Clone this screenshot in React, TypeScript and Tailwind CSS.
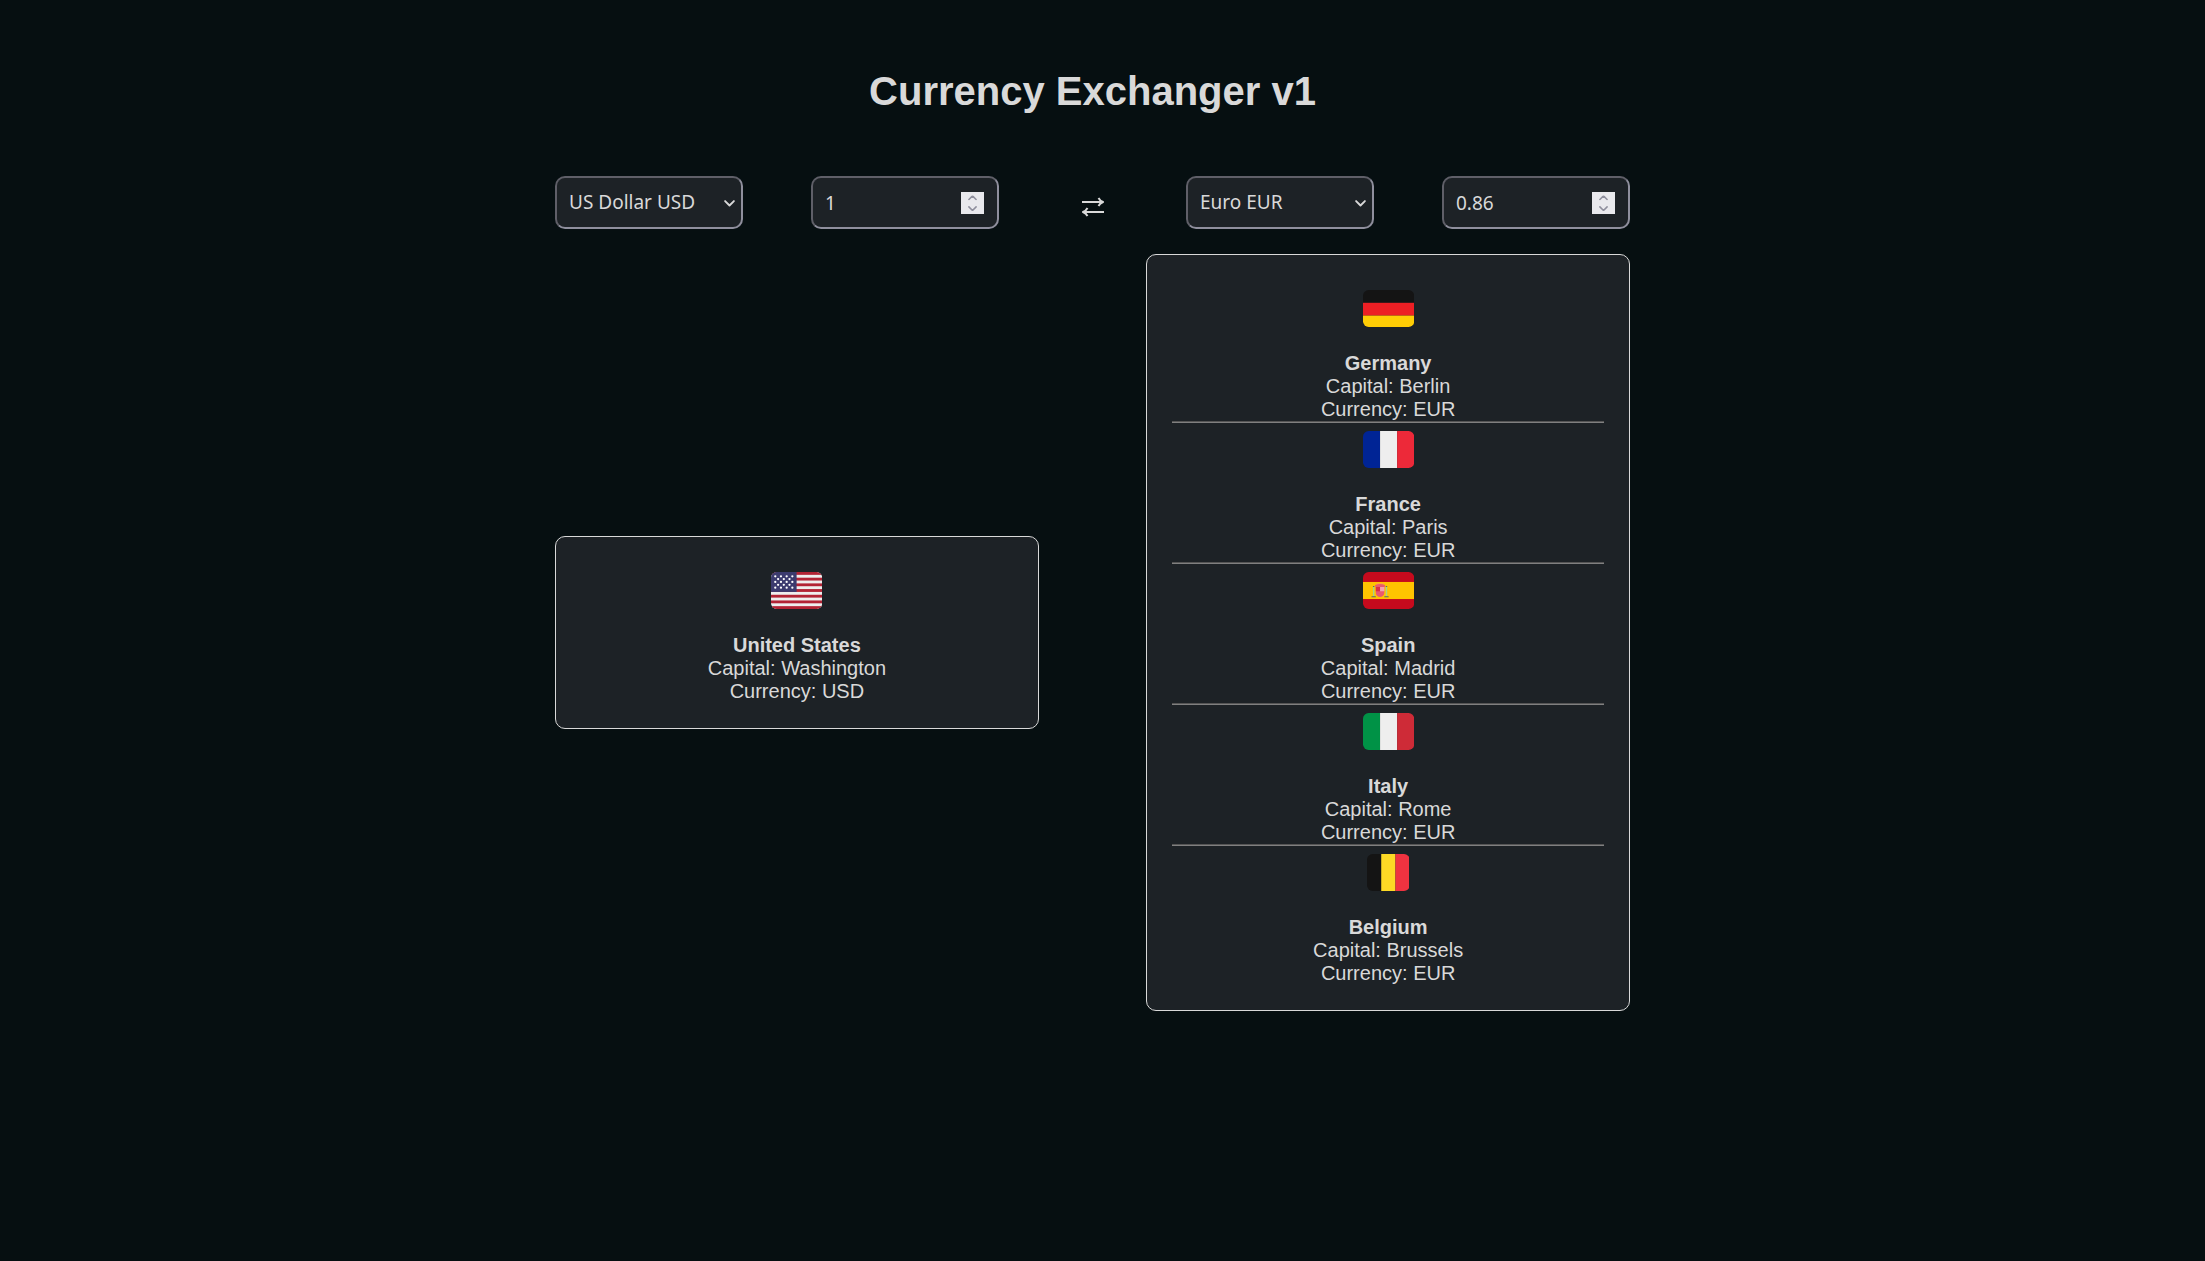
import { useState } from "react";
import type { ReactNode } from "react";

type FlagCode = "us" | "de" | "fr" | "es" | "it" | "be";

type Country = {
  code: FlagCode;
  name: string;
  capital: string;
  currency: string;
};

const usdCountries: Country[] = [
  { code: "us", name: "United States", capital: "Washington", currency: "USD" },
];

const eurCountries: Country[] = [
  { code: "de", name: "Germany", capital: "Berlin", currency: "EUR" },
  { code: "fr", name: "France", capital: "Paris", currency: "EUR" },
  { code: "es", name: "Spain", capital: "Madrid", currency: "EUR" },
  { code: "it", name: "Italy", capital: "Rome", currency: "EUR" },
  { code: "be", name: "Belgium", capital: "Brussels", currency: "EUR" },
];

const stripes = [0, 2, 4, 6, 8, 10, 12];
const stars = [
  [3, 3], [7, 3], [11, 3], [15, 3],
  [5, 5], [9, 5], [13, 5],
  [3, 7], [7, 7], [11, 7], [15, 7],
  [5, 9], [9, 9], [13, 9],
  [3, 11], [7, 11], [11, 11], [15, 11],
];

function Vertical({ a, b, c }: { a: string; b: string; c: string }) {
  return (
    <>
      <rect width="12" height="26" fill={a} />
      <rect x="12" width="12" height="26" fill={b} />
      <rect x="24" width="12" height="26" fill={c} />
    </>
  );
}

const flagArt: Record<FlagCode, ReactNode> = {
  us: (
    <>
      <rect width="36" height="26" fill="#eee" />
      {stripes.map((n) => (
        <rect key={n} y={n * 2} width="36" height="2" fill="#b22334" />
      ))}
      <rect width="18" height="14" fill="#3c3b6e" />
      {stars.map(([x, y]) => (
        <circle key={`${x}-${y}`} cx={x} cy={y} r="0.8" fill="#fff" />
      ))}
    </>
  ),
  de: (
    <>
      <rect width="36" height="9" fill="#141414" />
      <rect y="9" width="36" height="9" fill="#ed1f24" />
      <rect y="18" width="36" height="8" fill="#ffcd05" />
    </>
  ),
  fr: <Vertical a="#002495" b="#eee" c="#ed2939" />,
  es: (
    <>
      <rect width="36" height="26" fill="#c60a1d" />
      <rect y="7" width="36" height="12" fill="#ffc400" />
      <path d="M9.500 7.700h5v1.200h-5z" fill="#ffac33" />
      <path d="M9 9.500h6v5a3 3 0 0 1-6 0z" fill="#ea596e" />
      <path d="M9 10.500h3v3H9z" fill="#dd2e44" />
      <path d="M12 10.500h3v3h-3z" fill="#f4a2b2" />
      <path d="M8.500 9.200q3.500-1.600 7 0v1.200h-7z" fill="#ea596e" />
      <path d="M7 10.500h1V17H7zM16 10.500h1V17h-1z" fill="#a6d388" />
      <path d="M6 17h3v.8H6zM15 17h3v.8h-3zM7 9.800h1v.8H7zM16 9.800h1v.8h-1z" fill="#5c6570" />
    </>
  ),
  it: <Vertical a="#009246" b="#eee" c="#ce2b37" />,
  be: (
    <>
      <rect width="10" height="26" fill="#141414" />
      <rect x="10" width="10" height="26" fill="#fdda25" />
      <rect x="20" width="10" height="26" fill="#ef3340" />
    </>
  ),
};

function Flag({ code, label }: { code: FlagCode; label: string }) {
  const width = code === "be" ? 30 : 36;
  return (
    <svg
      role="img"
      aria-label={`Flag of ${label}`}
      viewBox={`0 0 ${width} 26`}
      className="h-[37px] w-auto"
    >
      <clipPath id={`flag-${code}`}>
        <rect width={width} height="26" rx="4" />
      </clipPath>
      <g clipPath={`url(#flag-${code})`}>{flagArt[code]}</g>
    </svg>
  );
}

function CountryItem({ country }: { country: Country }) {
  return (
    <li className="flex flex-col items-center text-xl leading-[23px] not-last:after:h-0.5 not-last:after:w-full not-last:after:border-t not-last:after:border-b not-last:after:border-t-[#555] not-last:after:border-b-[#808080] not-last:after:content-['']">
      <div className="flex h-[70px] items-start pt-2">
        <Flag code={country.code} label={country.name} />
      </div>
      <h2 className="font-bold">{country.name}</h2>
      <p>Capital: {country.capital}</p>
      <p>Currency: {country.currency}</p>
    </li>
  );
}

function CountryCard({ countries }: { countries: Country[] }) {
  return (
    <ul className="w-[45%] rounded-[10px] border border-[#d9d9d9] bg-[#1d2226] px-[25px] pt-[27px] pb-[25px]">
      {countries.map((country) => (
        <CountryItem key={country.code} country={country} />
      ))}
    </ul>
  );
}

function Chevron({ className }: { className: string }) {
  return (
    <svg
      aria-hidden="true"
      viewBox="0 0 10 6"
      fill="none"
      stroke="currentColor"
      strokeWidth="1.700"
      strokeLinecap="round"
      strokeLinejoin="round"
      className={className}
    >
      <path d="M1 1l4 4 4-4" />
    </svg>
  );
}

const fieldClass =
  "h-[53px] w-full appearance-none rounded-[10px] border-2 border-t-[#5f5f68] border-r-[#8f8f9d] border-b-[#8f8f9d] border-l-[#5f5f68] bg-[#1d2226] pl-3 font-['Noto_Sans',sans-serif] text-[19px] outline-none";

function CurrencySelect({
  label,
  value,
  onChange,
}: {
  label: string;
  value: string;
  onChange: (value: string) => void;
}) {
  return (
    <div className="relative w-[188px]">
      <select
        aria-label={label}
        value={value}
        onChange={(e) => onChange(e.target.value)}
        className={fieldClass}
      >
        <option value="USD">US Dollar USD</option>
        <option value="EUR">Euro EUR</option>
      </select>
      <Chevron className="pointer-events-none absolute top-6 right-2 w-[11px]" />
    </div>
  );
}

function AmountInput({
  label,
  value,
  onChange,
}: {
  label: string;
  value: string;
  onChange: (value: string) => void;
}) {
  const step = (delta: number) => onChange(String(Number(value) + delta));
  return (
    <div className="relative w-[188px]">
      <input
        type="number"
        aria-label={label}
        value={value}
        onChange={(e) => onChange(e.target.value)}
        className={`${fieldClass} pr-10 [-moz-appearance:textfield] [&::-webkit-inner-spin-button]:appearance-none`}
      />
      <div className="absolute top-4 right-[15px] flex h-[22px] w-[23px] flex-col bg-[#e9e9ed] text-[#8f8f9d]">
        <button
          type="button"
          aria-label={`Increase ${label}`}
          onClick={() => step(1)}
          className="flex flex-1 items-center justify-center"
        >
          <Chevron className="w-[9px] rotate-180" />
        </button>
        <button
          type="button"
          aria-label={`Decrease ${label}`}
          onClick={() => step(-1)}
          className="flex flex-1 items-center justify-center"
        >
          <Chevron className="w-[9px]" />
        </button>
      </div>
    </div>
  );
}

export default function App() {
  const [from, setFrom] = useState("USD");
  const [to, setTo] = useState("EUR");
  const [fromAmount, setFromAmount] = useState("1");
  const [toAmount, setToAmount] = useState("0.86");

  const swap = () => {
    setFrom(to);
    setTo(from);
    setFromAmount(toAmount);
    setToAmount(fromAmount);
  };

  const cards: Record<string, Country[]> = { USD: usdCountries, EUR: eurCountries };

  return (
    <div className="min-h-screen bg-[#060f11] pr-5 font-['Liberation_Sans',Arial,sans-serif] text-[#d9d9d9]">
      <main className="mx-auto flex max-w-[1075px] flex-col pt-[68px]">
        <h1 className="text-center text-[40px] leading-[46px] font-bold">Currency Exchanger v1</h1>
        <div className="mt-[62px] flex items-center justify-between">
          <div className="flex gap-[68px]">
            <CurrencySelect label="From currency" value={from} onChange={setFrom} />
            <AmountInput label="From amount" value={fromAmount} onChange={setFromAmount} />
          </div>
          <button type="button" aria-label="Swap currencies" onClick={swap} className="mt-2">
            <svg
              aria-hidden="true"
              viewBox="0 0 22 20"
              fill="none"
              stroke="currentColor"
              strokeWidth="1.900"
              className="h-5 w-[22px]"
            >
              <path d="M0 5h20.500M16.500 1c1 2 2.500 3.200 4.500 4-2 .8-3.500 2-4.500 4M22 15H1.500M5.500 11c-1 2-2.500 3.200-4.500 4 2 .8 3.500 2 4.500 4" />
            </svg>
          </button>
          <div className="flex gap-[68px]">
            <CurrencySelect label="To currency" value={to} onChange={setTo} />
            <AmountInput label="To amount" value={toAmount} onChange={setToAmount} />
          </div>
        </div>
        <div className="mt-[25px] flex items-center justify-between">
          <CountryCard countries={cards[from]} />
          <CountryCard countries={cards[to]} />
        </div>
      </main>
    </div>
  );
}
